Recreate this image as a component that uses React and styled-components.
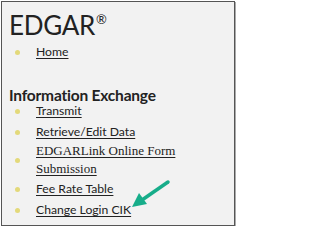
import React from 'react'
import styled, { createGlobalStyle } from 'styled-components'

const Global = createGlobalStyle`
    html, body {
        margin: 0;
        padding: 0;
        background: #fff;
    }
`

const Panel = styled.div`
    position: relative;
    box-sizing: border-box;
    width: 234px;
    height: 225px;
    margin: 1px 0 0 1px;
    padding: 6px 0 0 7px;
    background-color: #f2f2f2;
    border: 1px solid #555;
    box-shadow: 1px 1px 0 #aaa;
    font-family: Lato, "Open Sans", sans-serif;
    color: #222;
`

const Title = styled.h1`
    margin: 0;
    font-size: 26px;
    font-weight: 400;
    line-height: 34px;
    letter-spacing: -0.3px;

    sup {
        font-size: 13px;
        vertical-align: top;
        position: relative;
        top: -6px;
        margin-left: 1px;
    }
`

const Heading = styled.h2`
    margin: 24px 0 0 0;
    font-size: 15.5px;
    font-weight: 700;
    line-height: 20px;
    letter-spacing: -0.2px;
`

const List = styled.ul`
    list-style: none;
    margin: ${props => props.$top || 0}px 0 0 0;
    padding: 0;
`

const Item = styled.li`
    position: relative;
    padding-left: 27px;
    margin-bottom: ${props => props.$gap || 3}px;
    line-height: 18px;
    font-family: ${props => props.$serif ? '"Liberation Serif", serif' : 'Lato, sans-serif'};
    font-size: ${props => props.$serif ? '13px' : '12.2px'};

    &::before {
        content: '';
        position: absolute;
        left: 6px;
        top: ${props => props.$dot || 7}px;
        width: 5px;
        height: 5px;
        border-radius: 50%;
        background: #e3d97a;
    }
`

const Link = styled.a`
    color: #222;
    text-decoration: underline;
    text-underline-offset: 2px;
`

const Arrow = styled.svg`
    position: absolute;
    left: 126px;
    top: 174px;
`

export default function App() {
    return (
        <>
            <Global />
            <Panel>
                <Title>EDGAR<sup>®</sup></Title>
                <List $top={1}>
                    <Item><Link href="#">Home</Link></Item>
                </List>
                <Heading>Information Exchange</Heading>
                <List $top={-3}>
                    <Item><Link href="#">Transmit</Link></Item>
                    <Item $gap={1}><Link href="#">Retrieve/Edit Data</Link></Item>
                    <Item $serif $dot={16} $gap={2}><Link href="#">EDGARLink Online Form Submission</Link></Item>
                    <Item><Link href="#">Fee Rate Table</Link></Item>
                    <Item><Link href="#">Change Login CIK</Link></Item>
                </List>
                <Arrow width="48" height="34" viewBox="0 0 48 34">
                    <line x1="40" y1="6" x2="14" y2="24" stroke="#17ad8a" strokeWidth="3.5" strokeLinecap="round" />
                    <polygon points="4,31 11,17 19,28" fill="#17ad8a" />
                </Arrow>
            </Panel>
        </>
    )
}
